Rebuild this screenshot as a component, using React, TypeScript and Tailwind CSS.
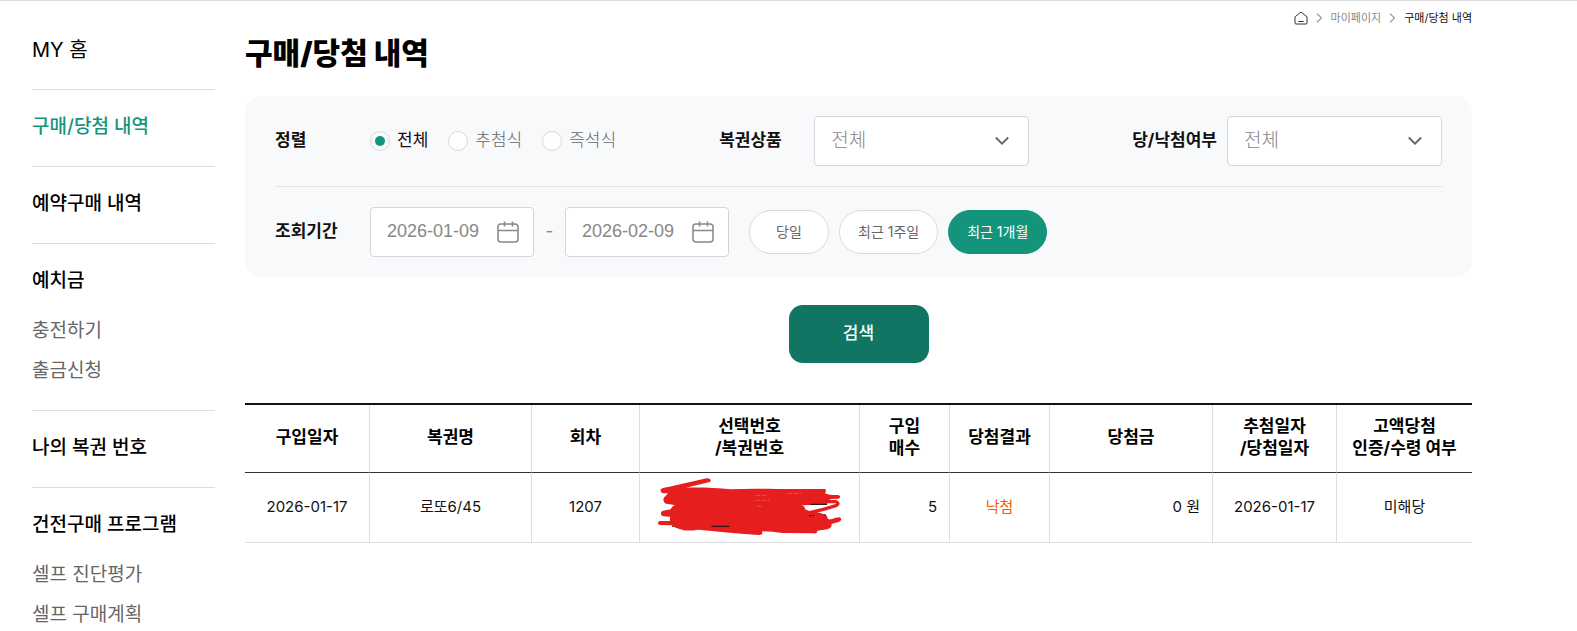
import { useState } from "react";
import clsx from "clsx";

type MenuItem = {
  label: string;
  active?: boolean;
  home?: boolean;
  children?: string[];
};

const menu: MenuItem[] = [
  { label: "MY 홈", home: true },
  { label: "구매/당첨 내역", active: true },
  { label: "예약구매 내역" },
  { label: "예치금", children: ["충전하기", "출금신청"] },
  { label: "나의 복권 번호" },
  { label: "건전구매 프로그램", children: ["셀프 진단평가", "셀프 구매계획"] },
];

const sortOptions = ["전체", "추첨식", "즉석식"];
const periods = ["당일", "최근 1주일", "최근 1개월"];

const columns = [
  { lines: ["구입일자"], width: "w-[125px]" },
  { lines: ["복권명"], width: "w-[162px]" },
  { lines: ["회차"], width: "w-[108px]" },
  { lines: ["선택번호", "/복권번호"], width: "w-[220px]" },
  { lines: ["구입", "매수"], width: "w-[90px]" },
  { lines: ["당첨결과"], width: "w-[100px]" },
  { lines: ["당첨금"], width: "w-[163px]" },
  { lines: ["추첨일자", "/당첨일자"], width: "w-[124px]" },
  { lines: ["고액당첨", "인증/수령 여부"], width: "w-[135px]" },
];

const HomeIcon = () => (
  <svg width="14" height="14" viewBox="0 0 14 14" fill="none" stroke="#333">
    <path d="M1 5.8 7 1l6 4.8v6.2a1 1 0 0 1-1 1H2a1 1 0 0 1-1-1z" />
    <path d="M4.3 10.5h5.4" />
  </svg>
);

const CrumbArrow = () => (
  <svg width="7" height="10" viewBox="0 0 7 10" fill="none" stroke="#999" strokeWidth="1.2">
    <path d="m1 .8 4.5 4.2L1 9.2" />
  </svg>
);

const CalendarIcon = () => (
  <svg width="22" height="22" viewBox="0 0 22 22" fill="none" stroke="#888" strokeWidth="1.5">
    <rect x="1" y="3" width="20" height="18" rx="3" />
    <path d="M1 9.5h20M7.5 .5v5M15.5 .5v5" />
  </svg>
);

const Scribble = () => (
  <svg
    className="mx-auto"
    width="184"
    height="62"
    viewBox="54 33 552 186"
    fill="none"
    stroke="#e61e1e"
    strokeWidth="12"
    strokeLinecap="round"
    strokeLinejoin="round"
    aria-label="가려진 번호"
  >
    <path
      fill="#e61e1e"
      stroke="none"
      d="M62 72C62 66 72 66 84 63L200 37C214 36 216 47 206 49L138 65C190 64 230 66 272 70C320 67 370 68 410 69L554 69C560 71 558 78 555 82C564 86 574 88 594 87C603 88 602 97 594 98L574 99L562 104L562 116L484 118C492 120 496 124 495 130L510 136C545 140 556 145 561 151C563 160 566 161 574 160C584 156 592 154 598 154C607 156 604 165 596 168L574 174C577 181 572 187 562 190L532 194C532 201 528 203 520 202L428 201C410 199 390 196 366 196C370 203 364 208 356 207C300 202 240 198 176 191C155 194 140 195 126 191C112 188 100 184 96 178L60 177C52 175 52 166 60 165L90 165L90 152L70 151C60 147 60 137 70 134L92 130C94 124 98 121 104 117L78 113C68 108 68 96 76 91L84 82L68 82C64 80 62 77 62 72Z"
    />
    <path strokeWidth="10" d="M562 107 588 107Q600 112 588 119L550 130 512 139" />
    <path stroke="#111" strokeWidth="3" strokeLinecap="butt" d="M512 115h49M214 181h54M551 147h7M507 149h8M518 149h4M96 181h4" />
    <path stroke="#f9a9a9" strokeWidth="1" strokeLinecap="butt" strokeDasharray="14 4" d="M346 88h36M346 103h44M442 82h42M351 121h16" />
  </svg>
);

const DateField = ({ id, label, value }: { id: string; label: string; value: string }) => (
  <div className="flex h-[50px] w-[164px] items-center rounded-[4px] border border-[#d3d5d8] bg-white pr-3.5 pl-4">
    <input
      id={id}
      type="text"
      aria-label={label}
      defaultValue={value}
      className="w-full min-w-0 pb-0.5 font-['Liberation_Sans',sans-serif] text-[18px] text-[#888] outline-none"
    />
    <button type="button" aria-label={`${label} 달력 열기`} className="shrink-0">
      <CalendarIcon />
    </button>
  </div>
);

const SelectField = ({ id }: { id: string }) => (
  <div className="relative w-[215px]">
    <select
      id={id}
      className="h-[50px] w-full appearance-none rounded-[4px] border border-[#d3d5d8] bg-white pl-4 text-[19px] font-light text-[#888]"
    >
      <option>전체</option>
    </select>
    <svg
      className="pointer-events-none absolute top-5 right-5"
      width="14"
      height="10"
      viewBox="0 0 14 10"
      fill="none"
      stroke="#666"
      strokeWidth="1.8"
    >
      <path d="m.8 1.5 6.2 6.2 6.2-6.2" />
    </svg>
  </div>
);

const Sidebar = () => (
  <nav className="w-[183px] shrink-0 pt-3">
    <ul>
      {menu.map((item) => (
        <li
          key={item.label}
          className="border-b border-[#ddd] pt-[23px] pb-[25px] text-[19px] leading-7 whitespace-nowrap last:border-b-0"
        >
          <a
            href="#"
            className={clsx(
              "block",
              item.active ? "text-[#14957b]" : "text-black",
              item.home ? "text-[20px]" : "font-medium"
            )}
          >
            {item.label}
          </a>
          {item.children && (
            <ul className="mt-[22px] space-y-3">
              {item.children.map((child) => (
                <li key={child}>
                  <a href="#" className="block text-[#666]">
                    {child}
                  </a>
                </li>
              ))}
            </ul>
          )}
        </li>
      ))}
    </ul>
  </nav>
);

const SearchFilter = () => {
  const [sort, setSort] = useState("전체");
  const [period, setPeriod] = useState("최근 1개월");

  return (
    <form className="text-[17px]" onSubmit={(e) => e.preventDefault()}>
      <div className="rounded-2xl bg-[#f8f9fb] px-[30px]">
        <div className="flex items-center justify-between border-b border-[#e2e4e6] py-5">
          <div className="flex items-center" role="radiogroup" aria-labelledby="sort-label">
            <span id="sort-label" className="w-[95px] font-bold text-[#111]">
              정렬
            </span>
            <div className="flex gap-5">
              {sortOptions.map((option) => (
                <label
                  key={option}
                  className={clsx(
                    "flex items-center gap-[7px]",
                    sort === option ? "text-[#111]" : "font-light text-[#666]"
                  )}
                >
                  <input
                    type="radio"
                    name="sort"
                    checked={sort === option}
                    onChange={() => setSort(option)}
                    className="size-5 appearance-none rounded-full border border-[#d8dadc] bg-white bg-clip-content checked:bg-[#14957b] checked:p-1"
                  />
                  {option}
                </label>
              ))}
            </div>
          </div>
          <div className="flex items-center">
            <label htmlFor="product" className="w-[95px] font-bold text-[#111]">
              복권상품
            </label>
            <SelectField id="product" />
          </div>
          <div className="flex items-center gap-2.5">
            <label htmlFor="result" className="font-bold text-[#111]">
              당/낙첨여부
            </label>
            <SelectField id="result" />
          </div>
        </div>
        <div className="flex items-center py-5">
          <span className="w-[95px] font-bold text-[#111]">조회기간</span>
          <DateField id="from" label="시작일" value="2026-01-09" />
          <span className="w-[31px] text-center text-[#888]">-</span>
          <DateField id="to" label="종료일" value="2026-02-09" />
          <div className="ml-5 flex gap-2.5 text-[14px]">
            {periods.map((p) => (
              <button
                key={p}
                type="button"
                onClick={() => setPeriod(p)}
                className={clsx(
                  "h-11 min-w-20 rounded-full border px-[18px] pb-0.5",
                  period === p
                    ? "border-[#14957b] bg-[#14957b] text-white"
                    : "border-[#d8dadc] bg-white text-[#666]"
                )}
              >
                {p}
              </button>
            ))}
          </div>
        </div>
      </div>
      <button
        type="submit"
        className="mx-auto mt-7 block h-[58px] w-[140px] rounded-[14px] bg-[#107562] font-medium text-white"
      >
        검색
      </button>
    </form>
  );
};

const HistoryTable = () => (
  <table className="mt-10 w-full table-fixed border-separate border-spacing-0 border-t-2 border-[#111] text-center text-[15px] text-[#111]">
    <thead>
      <tr>
        {columns.map((column) => (
          <th
            key={column.lines[0]}
            scope="col"
            className={clsx(
              "h-[68px] border-r border-b border-r-[#ddd] border-b-[#333] pb-1 text-[17px] leading-[22px] font-bold text-black last:border-r-0",
              column.width
            )}
          >
            {column.lines.map((line) => (
              <span key={line} className="block">
                {line}
              </span>
            ))}
          </th>
        ))}
      </tr>
    </thead>
    <tbody className="[&_td]:h-[70px] [&_td]:border-r [&_td]:border-b [&_td]:border-[#ddd] [&_td:last-child]:border-r-0">
      <tr>
        <td>2026-01-17</td>
        <td>로또6/45</td>
        <td>1207</td>
        <td>
          <Scribble />
        </td>
        <td className="pr-3 text-right">5</td>
        <td className="text-[#ff5a00]">낙첨</td>
        <td className="pr-3 text-right">0 원</td>
        <td>2026-01-17</td>
        <td>미해당</td>
      </tr>
    </tbody>
  </table>
);

export default function App() {
  return (
    <div className="flex gap-[30px] border-t border-[#ddd] bg-white pr-[105px] pl-8 font-['Inter','Noto_Sans_CJK_KR',sans-serif]">
      <Sidebar />
      <main className="min-w-0 flex-1">
        <header className="flex h-[95px] items-start justify-between">
          <h1 className="pt-[29px] text-[30px] leading-[46px] font-black text-black">구매/당첨 내역</h1>
          <nav className="flex items-center gap-2 pt-2 text-[11px] leading-[18px]" aria-label="현재 위치">
            <a href="#" aria-label="홈">
              <HomeIcon />
            </a>
            <CrumbArrow />
            <a href="#" className="text-[#888]">
              마이페이지
            </a>
            <CrumbArrow />
            <span className="text-[#111]">구매/당첨 내역</span>
          </nav>
        </header>
        <SearchFilter />
        <HistoryTable />
      </main>
    </div>
  );
}
